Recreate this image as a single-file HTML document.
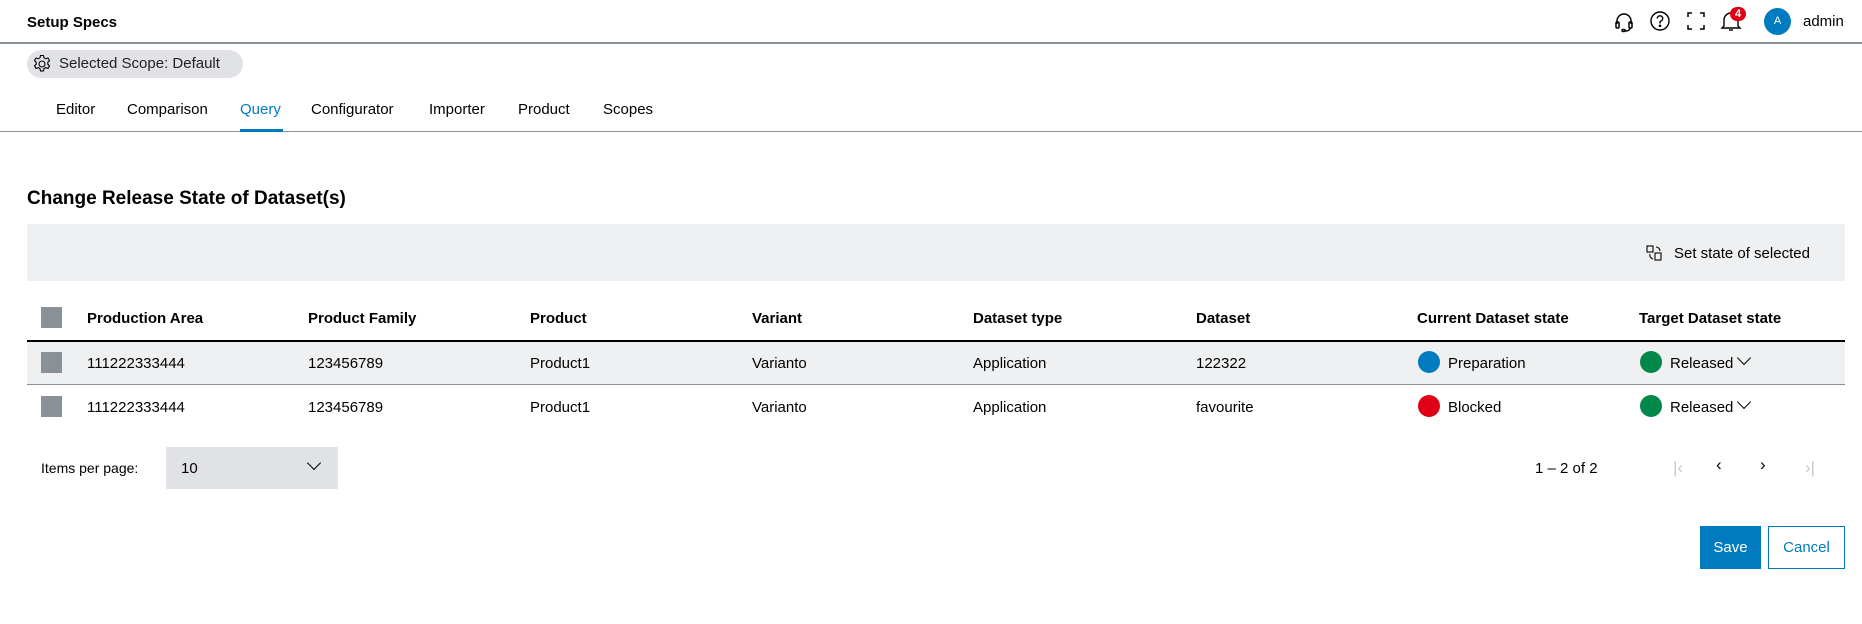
<!DOCTYPE html>
<html><head><meta charset="utf-8"><style>
*{margin:0;padding:0;box-sizing:border-box}
body{width:1862px;height:624px;background:#fff;font-family:"Liberation Sans",sans-serif;color:#000;position:relative;overflow:hidden;font-size:15px}
.a{position:absolute;white-space:nowrap}
.b{font-weight:bold}
.cb{position:absolute;width:21px;height:21px;background:#8a9097}
.dot{display:inline-block;width:22px;height:22px;border-radius:50%;vertical-align:middle;margin-right:8px;position:relative;top:-2px}
.chev{display:inline-block;width:10px;height:10px;border-right:1.5px solid #000;border-bottom:1.5px solid #000;transform:rotate(45deg);margin-left:6px;position:relative;top:-5px}
</style></head><body>
<div class="a b" style="left:27px;top:14px;font-size:15px">Setup Specs</div>
<svg class="a" style="left:1612px;top:10px" width="24" height="24" viewBox="0 0 24 24" fill="none" stroke="#000" stroke-width="1.5"><path d="M5 14V11a7 7 0 0 1 14 0v3"/><rect x="4" y="12" width="3" height="6" rx="1"/><rect x="17" y="12" width="3" height="6" rx="1"/><path d="M18 18c0 2-2 3-5 3"/><rect x="10" y="19.5" width="3" height="2" rx="1"/></svg>
<svg class="a" style="left:1649px;top:10px" width="22" height="22" viewBox="0 0 22 22" fill="none" stroke="#000" stroke-width="1.4"><circle cx="11" cy="11" r="9"/><path d="M8.3 8.5a2.7 2.7 0 1 1 3.7 2.5c-.7.3-1 .8-1 1.5v1"/><circle cx="11" cy="15.8" r=".6" fill="#000"/></svg>
<svg class="a" style="left:1687px;top:12px" width="18" height="18" viewBox="0 0 18 18" fill="none" stroke="#000" stroke-width="1.5"><path d="M1 5V1h4M13 1h4v4M17 13v4h-4M5 17H1v-4"/></svg>
<svg class="a" style="left:1720px;top:9px" width="22" height="24" viewBox="0 0 22 24" fill="none" stroke="#000" stroke-width="1.4"><path d="M4 17V11a7 7 0 0 1 14 0v6l2 2H2z"/><path d="M9 21h4"/></svg>
<div class="a" style="left:1730px;top:7px;background:#e00015;color:#fff;font-size:11px;font-weight:bold;border-radius:8px;padding:0 5px;height:14px;line-height:14px">4</div>
<div class="a" style="left:1764px;top:8px;width:27px;height:27px;border-radius:50%;background:#007bc0;color:#fff;font-size:11px;text-align:center;line-height:27px">A</div>
<div class="a" style="left:1803px;top:13px;font-size:15px">admin</div>
<div class="a" style="left:0;top:42px;width:1862px;height:2px;background:#8a9097"></div>
<div class="a" style="left:27px;top:50px;width:216px;height:28px;border-radius:14px;background:#e0e2e5"></div>
<svg class="a" style="left:32px;top:54px" width="20" height="20" viewBox="0 0 20 20" fill="none" stroke="#000" stroke-width="1.1"><path d="M8.5 1.5h3l.5 2.3 1.8 1 2.2-.8 1.5 2.6-1.7 1.6v2l1.7 1.6-1.5 2.6-2.2-.8-1.8 1-.5 2.3h-3l-.5-2.3-1.8-1-2.2.8-1.5-2.6 1.7-1.6v-2L2.5 6.6 4 4l2.2.8 1.8-1z"/><circle cx="10" cy="10" r="3"/></svg>
<div class="a" style="left:59px;top:55px;font-size:15px;color:#222">Selected Scope: Default</div>
<div class="a" style="left:56px;top:101px">Editor</div>
<div class="a" style="left:127px;top:101px">Comparison</div>
<div class="a" style="left:240px;top:101px;color:#007bc0">Query</div>
<div class="a" style="left:311px;top:101px">Configurator</div>
<div class="a" style="left:429px;top:101px">Importer</div>
<div class="a" style="left:518px;top:101px">Product</div>
<div class="a" style="left:603px;top:101px">Scopes</div>
<div class="a" style="left:0;top:131px;width:1862px;height:1px;background:#8a9097"></div>
<div class="a" style="left:240px;top:129px;width:43px;height:3px;background:#007bc0"></div>
<div class="a b" style="left:27px;top:188px;font-size:19px">Change Release State of Dataset(s)</div>
<div class="a" style="left:27px;top:224px;width:1818px;height:57px;background:#eff0f1"></div>
<svg class="a" style="left:1646px;top:245px" width="16" height="16" viewBox="0 0 16 16" fill="none" stroke="#000" stroke-width="1.1"><rect x="1" y="1" width="6" height="6"/><rect x="9" y="8" width="6" height="7"/><path d="M10 2a4 4 0 0 1 4 4M4 9a4 4 0 0 0 3 5"/></svg>
<div class="a" style="left:1674px;top:245px">Set state of selected</div>
<div class="cb" style="left:41px;top:307px"></div>
<div class="a b" style="left:87px;top:310px">Production Area</div>
<div class="a b" style="left:308px;top:310px">Product Family</div>
<div class="a b" style="left:530px;top:310px">Product</div>
<div class="a b" style="left:752px;top:310px">Variant</div>
<div class="a b" style="left:973px;top:310px">Dataset type</div>
<div class="a b" style="left:1196px;top:310px">Dataset</div>
<div class="a b" style="left:1417px;top:310px">Current Dataset state</div>
<div class="a b" style="left:1639px;top:310px">Target Dataset state</div>
<div class="a" style="left:27px;top:340px;width:1818px;height:2px;background:#000"></div>
<div class="a" style="left:27px;top:342px;width:1818px;height:43px;background:#eff0f1"></div>
<div class="a" style="left:27px;top:384px;width:1818px;height:1px;background:#8a9097"></div>
<div class="cb" style="left:41px;top:352px"></div>
<div class="a" style="left:87px;top:355px">111222333444</div>
<div class="a" style="left:308px;top:355px">123456789</div>
<div class="a" style="left:530px;top:355px">Product1</div>
<div class="a" style="left:752px;top:355px">Varianto</div>
<div class="a" style="left:973px;top:355px">Application</div>
<div class="a" style="left:1196px;top:355px">122322</div>
<div class="a" style="left:1418px;top:353px"><span class="dot" style="background:#007bc0"></span>Preparation</div>
<div class="a" style="left:1640px;top:353px"><span class="dot" style="background:#00884a"></span>Released<span class="chev"></span></div>
<div class="cb" style="left:41px;top:396px"></div>
<div class="a" style="left:87px;top:399px">111222333444</div>
<div class="a" style="left:308px;top:399px">123456789</div>
<div class="a" style="left:530px;top:399px">Product1</div>
<div class="a" style="left:752px;top:399px">Varianto</div>
<div class="a" style="left:973px;top:399px">Application</div>
<div class="a" style="left:1196px;top:399px">favourite</div>
<div class="a" style="left:1418px;top:397px"><span class="dot" style="background:#e00015"></span>Blocked</div>
<div class="a" style="left:1640px;top:397px"><span class="dot" style="background:#00884a"></span>Released<span class="chev"></span></div>
<div class="a" style="left:41px;top:460px;font-size:14px">Items per page:</div>
<div class="a" style="left:166px;top:447px;width:172px;height:42px;background:#e0e2e5"></div>
<div class="a" style="left:181px;top:460px">10</div>
<div class="a" style="left:309px;top:458px;width:10px;height:10px;border-right:1.3px solid #000;border-bottom:1.3px solid #000;transform:rotate(45deg)"></div>
<div class="a" style="left:1535px;top:460px">1 – 2 of 2</div>
<div class="a" style="left:1673px;top:458px;color:#c1c7cc;font-size:17px">|‹</div>
<div class="a" style="left:1716px;top:455px;font-size:17px">‹</div>
<div class="a" style="left:1760px;top:455px;font-size:17px">›</div>
<div class="a" style="left:1805px;top:458px;color:#c1c7cc;font-size:17px">›|</div>
<div class="a" style="left:1700px;top:526px;width:61px;height:43px;background:#007bc0;color:#fff;text-align:center;line-height:43px">Save</div>
<div class="a" style="left:1768px;top:526px;width:77px;height:43px;border:1px solid #007bc0;color:#007bc0;text-align:center;line-height:41px">Cancel</div>
</body></html>
